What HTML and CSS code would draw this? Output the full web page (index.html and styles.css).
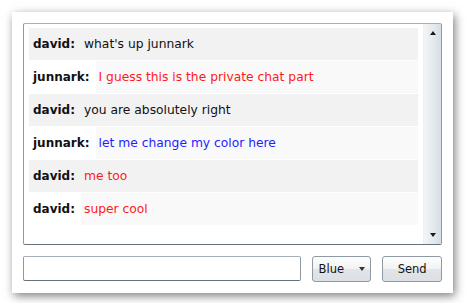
FILE: index.html
```html
<!DOCTYPE html>
<html>
<head>
<meta charset="utf-8">
<link rel="stylesheet" href="styles.css">
</head>
<body>
<div class="panel">
  <div class="chat">
    <div class="messages">
      <div class="row odd"><span class="name">david:</span><span class="msg">what's up junnark</span></div>
      <div class="row even"><span class="name">junnark:</span><span class="msg red">I guess this is the private chat part</span></div>
      <div class="row odd"><span class="name">david:</span><span class="msg">you are absolutely right</span></div>
      <div class="row even"><span class="name">junnark:</span><span class="msg blue">let me change my color here</span></div>
      <div class="row odd"><span class="name">david:</span><span class="msg red">me too</span></div>
      <div class="row even"><span class="name">david:</span><span class="msg red">super cool</span></div>
    </div>
    <div class="scrollbar">
      <span class="arrow up"></span>
      <span class="arrow down"></span>
    </div>
  </div>
  <div class="controls">
    <div class="textbox"></div>
    <div class="button select"><span>Blue</span><span class="caret"></span></div>
    <div class="button send">Send</div>
  </div>
</div>
</body>
</html>
```

FILE: styles.css
```css
html, body {
  margin: 0;
  padding: 0;
  background: #ffffff;
}
body {
  font-family: "DejaVu Sans", Verdana, sans-serif;
  font-size: 12px;
  color: #111;
}
.panel {
  margin: 12px;
  width: 441px;
  height: 281px;
  box-sizing: border-box;
  padding: 11px;
  background: #fff;
  box-shadow: 2px 3px 9px rgba(0, 0, 0, 0.5);
  display: flex;
  flex-direction: column;
  gap: 11px;
}
.chat {
  height: 222px;
  box-sizing: border-box;
  border: 1px solid #8d99a5;
  border-top-color: #a6b0ba;
  border-bottom-color: #66727e;
  border-radius: 2px;
  display: flex;
  gap: 5px;
}
.messages {
  flex: 1;
  padding: 4px 0 0 5px;
  display: flex;
  flex-direction: column;
  gap: 1px;
}
.row {
  height: 32px;
  display: flex;
  align-items: stretch;
}
.row.odd {
  background: #f2f2f2;
}
.name {
  font-weight: bold;
  padding: 0 6px 0 4px;
  display: flex;
  align-items: center;
}
.msg {
  flex: 1;
  padding-left: 3px;
  font-size: 12.3px;
  display: flex;
  align-items: center;
}
.row.even .msg {
  background: #f9f9f9;
}
.red { color: #ff1a1a; }
.blue { color: #1f1fff; }
.scrollbar {
  width: 16px;
  background: linear-gradient(to right, #f3f5f7 0%, #e6ebef 50%, #d6dde3 100%);
  border-left: 1px solid #eef1f4;
  display: flex;
  flex-direction: column;
  justify-content: space-between;
  align-items: center;
  padding: 7px 0 7px 1px;
}
.arrow {
  width: 0;
  height: 0;
  border-left: 3.5px solid transparent;
  border-right: 3.5px solid transparent;
}
.arrow.up {
  border-bottom: 4px solid #1a1a1a;
}
.arrow.down {
  border-top: 4px solid #1a1a1a;
}
.controls {
  display: flex;
  gap: 11px;
  height: 26px;
  align-items: flex-start;
}
.textbox {
  width: 279px;
  height: 25px;
  box-sizing: border-box;
  border: 1px solid #8d99a5;
  border-top-color: #a6b0ba;
  border-bottom-color: #66727e;
  border-radius: 2px;
  background: #fff;
}
.button {
  height: 26px;
  box-sizing: border-box;
  border: 1px solid #8f9aa5;
  border-radius: 3px;
  background: linear-gradient(to bottom, #fdfdfd 0%, #f1f2f3 50%, #e2e5e8 51%, #dcdfe3 100%);
  font-size: 11.5px;
  color: #111;
  display: flex;
  align-items: center;
}
.select {
  width: 60px;
  padding: 0 0 0 6px;
}
.select .caret {
  margin-left: 15px;
  width: 0;
  height: 0;
  border-left: 3.5px solid transparent;
  border-right: 3.5px solid transparent;
  border-top: 4px solid #333;
}
.send {
  width: 60px;
  justify-content: center;
}
```
